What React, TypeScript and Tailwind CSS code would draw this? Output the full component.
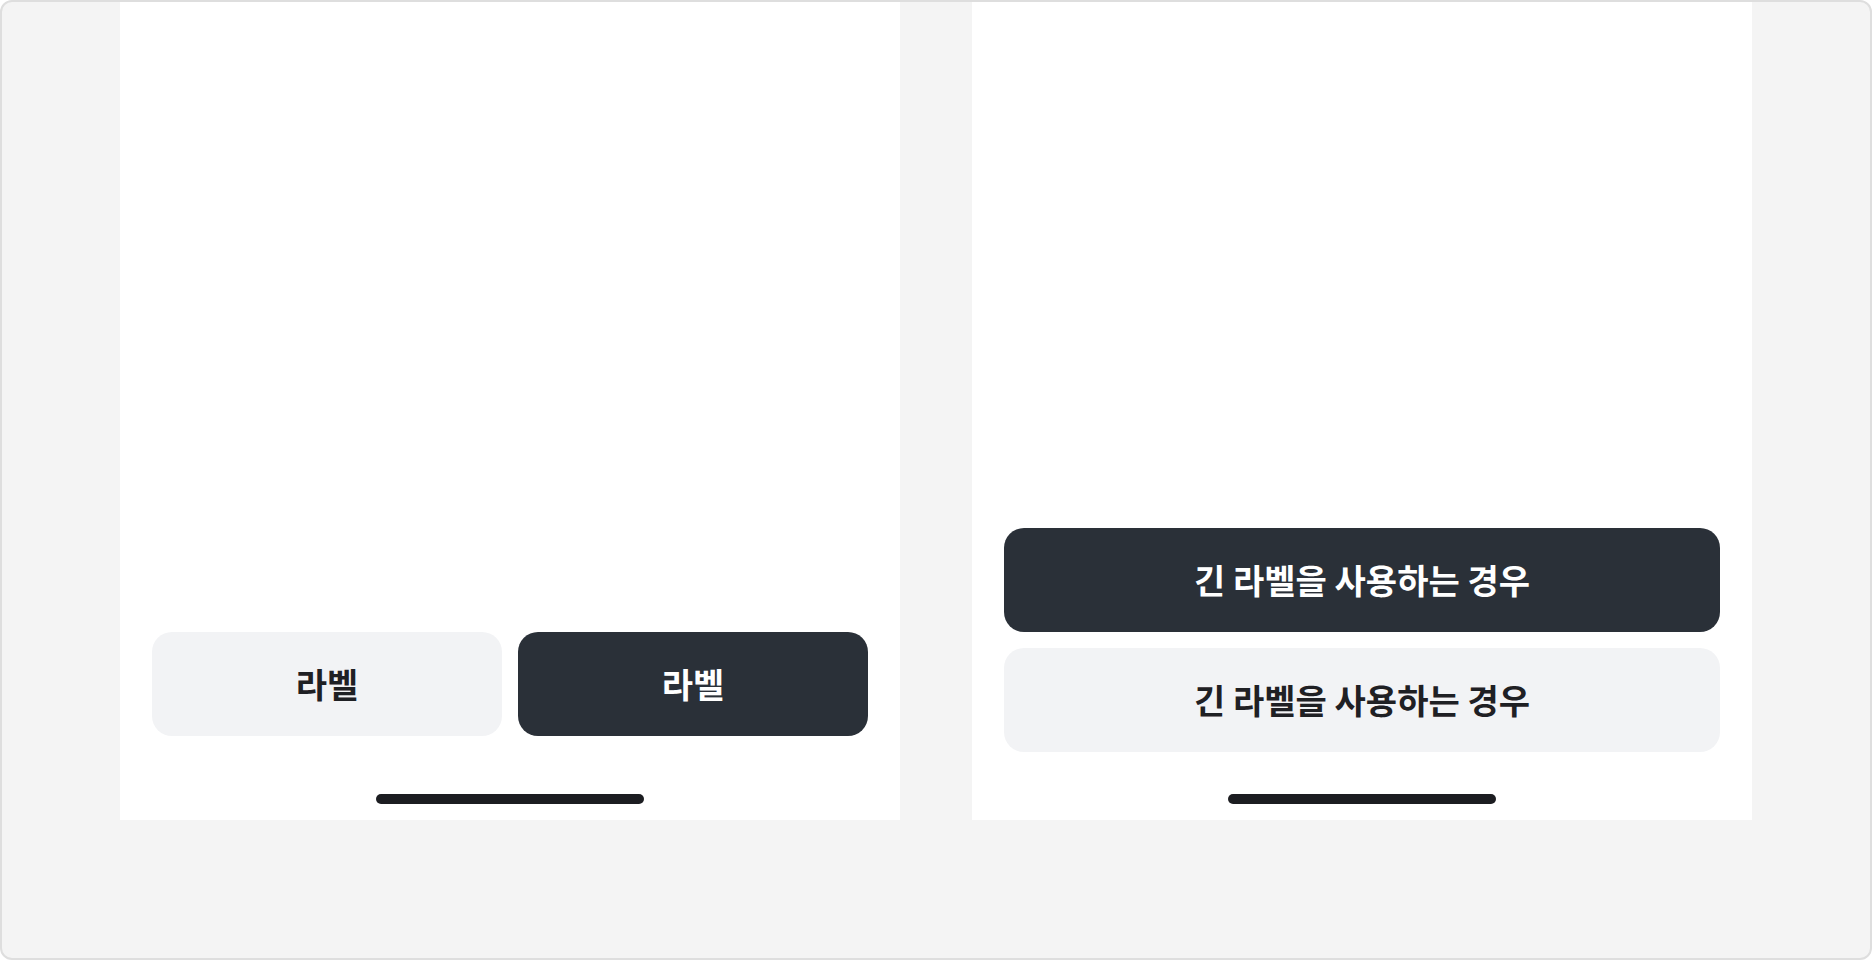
const font = { fontFamily: '"Noto Sans CJK KR", "Noto Sans", sans-serif' }

function HomeIndicator() {
  return (
    <div className="flex justify-center pb-4">
      <div className="h-[10px] w-[268px] rounded-full bg-[#1c1d21]" />
    </div>
  )
}

function ActionButton({ label, dark }: { label: string; dark?: boolean }) {
  return (
    <button
      className={`flex h-[104px] w-full items-center justify-center rounded-[20px] text-[34px] leading-none font-bold ${
        dark ? "bg-[#2a3038] text-white" : "bg-[#f2f3f5] text-[#1f2024]"
      }`}
      style={font}
    >
      {label}
    </button>
  )
}

export default function App() {
  return (
    <div className="h-[960px] w-full overflow-hidden rounded-[12px] border-2 border-[#dedede] bg-[#f4f4f4]">
      <div className="-mt-[2px] flex gap-[72px] px-[118px]">
        <div className="flex h-[820px] w-[780px] flex-col justify-end bg-white">
          <div className="flex gap-4 px-8 pb-[58px]">
            <ActionButton label="라벨" />
            <ActionButton label="라벨" dark />
          </div>
          <HomeIndicator />
        </div>

        <div className="flex h-[820px] w-[780px] flex-col justify-end bg-white">
          <div className="flex flex-col gap-4 px-8 pb-[42px]">
            <ActionButton label="긴 라벨을 사용하는 경우" dark />
            <ActionButton label="긴 라벨을 사용하는 경우" />
          </div>
          <HomeIndicator />
        </div>
      </div>
    </div>
  )
}
